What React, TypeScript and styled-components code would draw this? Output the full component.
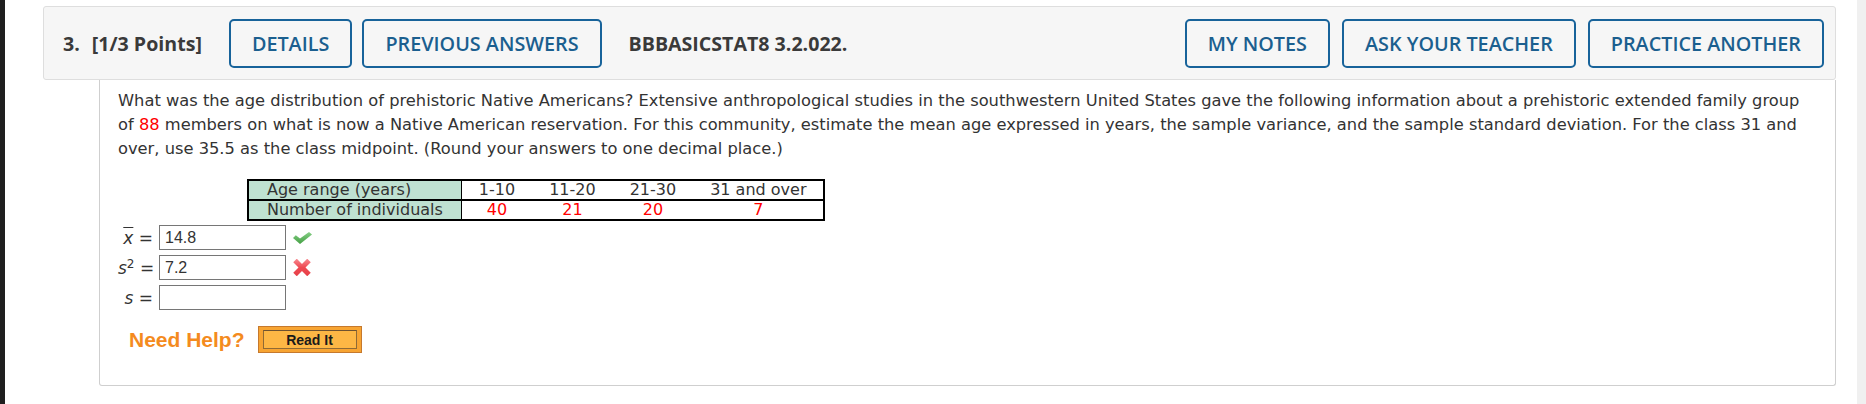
import React from 'react';
import styled, { createGlobalStyle } from 'styled-components';

const GlobalStyle = createGlobalStyle`
  html, body {
    margin: 0;
    padding: 0;
    background: #ffffff;
  }
  body {
    font-family: 'DejaVu Sans', Verdana, sans-serif;
    color: #333333;
  }
`;

const Page = styled.div`
  display: flex;
  height: 404px;
  overflow: hidden;
`;

const WindowEdge = styled.div`
  width: 5px;
  background: #1f1f1f;
  flex-shrink: 0;
`;

const Main = styled.main`
  flex: 1;
  padding: 6px 21px 0 38px;
  min-width: 0;
`;

const ScrollTrack = styled.div`
  width: 9px;
  background: #f0f0f0;
  flex-shrink: 0;
`;

const QuestionHeader = styled.header`
  display: flex;
  align-items: center;
  height: 74px;
  box-sizing: border-box;
  padding: 0 11px 0 19px;
  background: #f6f6f6;
  border: 1px solid #dedede;
  border-radius: 3px;
  font-family: 'Open Sans', 'Liberation Sans', sans-serif;
`;

const Title = styled.div`
  font-size: 19.6px;
  font-weight: 700;
  color: #3a3a3a;
  margin-right: 27px;
  white-space: nowrap;

  span {
    margin-left: 12px;
  }
`;

const HeaderButton = styled.button`
  height: 49px;
  box-sizing: border-box;
  padding: 0 21px;
  background: transparent;
  border: 2px solid #18639a;
  border-radius: 5px;
  font-family: 'Open Sans', 'Liberation Sans', sans-serif;
  font-size: 19.8px;
  font-weight: 600;
  color: #1b5f8f;
  white-space: nowrap;
  cursor: pointer;
`;

const ButtonGroup = styled.div<{ $gap: number }>`
  display: flex;
  gap: ${(p) => p.$gap}px;
`;

const Code = styled.div`
  margin-left: 27px;
  font-size: 19.6px;
  font-weight: 700;
  color: #3a3a3a;
  white-space: nowrap;
`;

const Spacer = styled.div`
  flex: 1;
`;

const QuestionBody = styled.section`
  margin-left: 56px;
  height: 306px;
  box-sizing: border-box;
  padding: 9px 18px 0 18px;
  border: 1px solid #cfcfcf;
  border-top: none;
  border-radius: 0 0 3px 3px;
`;

const Prompt = styled.p`
  margin: 0;
  font-size: 16.3px;
  line-height: 24px;
  color: #333333;
`;

const Red = styled.span`
  color: #ff0000;
`;

const DataTable = styled.table`
  margin: 18px 0 0 129px;
  border-collapse: collapse;
  border: 2px solid #000000;
  font-size: 16px;
  line-height: 18px;
  color: #333333;
`;

const HeadCell = styled.th`
  background: #bfe1d1;
  font-weight: normal;
  text-align: left;
  padding: 0 18px;
  border-right: 1px solid #000000;
  white-space: nowrap;
`;

const ValueCell = styled.td<{ $red?: boolean }>`
  text-align: center;
  padding: 0 17px;
  white-space: nowrap;
  color: ${(p) => (p.$red ? '#ff0000' : '#333333')};
`;

const TopRow = styled.tr`
  border-bottom: 2px solid #000000;
`;

const Answers = styled.div`
  display: flex;
  flex-direction: column;
  gap: 5px;
  margin-top: 4px;
`;

const AnswerRow = styled.div`
  display: flex;
  align-items: center;
`;

const Label = styled.div`
  width: 35px;
  text-align: right;
  font-size: 17px;
  line-height: 20px;
  color: #333333;
  margin-right: 6px;
  white-space: nowrap;

  i {
    font-style: italic;
  }
  sup {
    font-size: 12px;
    vertical-align: 6px;
    line-height: 0;
  }
`;

const Bar = styled.i`
  text-decoration: overline;
`;

const AnswerInput = styled.input`
  width: 127px;
  height: 25px;
  box-sizing: border-box;
  border: 1px solid #767676;
  padding: 0 5px;
  font-family: 'Liberation Sans', Arial, sans-serif;
  font-size: 16px;
  color: #333333;
  background: #ffffff;
  outline: none;
`;

const Mark = styled.div`
  width: 20px;
  margin-left: 6px;
  display: flex;
  align-items: center;
  justify-content: center;
`;

const HelpRow = styled.div`
  display: flex;
  align-items: center;
  margin: 16px 0 0 11px;
`;

const NeedHelp = styled.span`
  font-family: 'Liberation Sans', Arial, sans-serif;
  font-size: 21px;
  font-weight: 700;
  color: #f48b1e;
  margin-right: 13px;
`;

const ReadItOuter = styled.button`
  box-sizing: border-box;
  width: 104px;
  height: 27px;
  padding: 3px 4px;
  background: #f7a432;
  border: 1px solid #c6792d;
  cursor: pointer;
  display: flex;
`;

const ReadItInner = styled.span`
  flex: 1;
  display: flex;
  align-items: center;
  justify-content: center;
  background: #fdb745;
  border: 1px solid #8f6a35;
  border-top-color: #6f5230;
  font-family: 'Liberation Sans', Arial, sans-serif;
  font-size: 14px;
  font-weight: 700;
  color: #1a1a1a;
`;

const CheckIcon = () => (
  <svg width="19" height="12" viewBox="0 0 19 12">
    <defs>
      <linearGradient id="chk" x1="0" y1="0" x2="0" y2="1">
        <stop offset="0" stopColor="#86cf86" />
        <stop offset="1" stopColor="#44a044" />
      </linearGradient>
    </defs>
    <polygon points="0,6 2.8,3.2 7,6.6 16,0 19,2.6 7,12" fill="url(#chk)" />
  </svg>
);

const CrossIcon = () => (
  <svg width="18" height="17" viewBox="0 0 18 17">
    <defs>
      <linearGradient id="crs" x1="0" y1="0" x2="0" y2="1">
        <stop offset="0" stopColor="#f67d84" />
        <stop offset="0.5" stopColor="#ee4a52" />
        <stop offset="1" stopColor="#e8424a" />
      </linearGradient>
    </defs>
    <g stroke="url(#crs)" strokeWidth="5" strokeLinecap="butt">
      <line x1="2" y1="1.5" x2="16" y2="15.5" />
      <line x1="16" y1="1.5" x2="2" y2="15.5" />
    </g>
  </svg>
);

const ranges = ['1-10', '11-20', '21-30', '31 and over'];
const counts = ['40', '21', '20', '7'];

const App: React.FC = () => {
  return (
    <Page>
      <GlobalStyle />
      <WindowEdge />
      <Main>
        <QuestionHeader>
          <Title>
            3.<span>[1/3 Points]</span>
          </Title>
          <ButtonGroup $gap={10}>
            <HeaderButton>DETAILS</HeaderButton>
            <HeaderButton>PREVIOUS ANSWERS</HeaderButton>
          </ButtonGroup>
          <Code>BBBASICSTAT8 3.2.022.</Code>
          <Spacer />
          <ButtonGroup $gap={12}>
            <HeaderButton>MY NOTES</HeaderButton>
            <HeaderButton>ASK YOUR TEACHER</HeaderButton>
            <HeaderButton>PRACTICE ANOTHER</HeaderButton>
          </ButtonGroup>
        </QuestionHeader>
        <QuestionBody>
          <Prompt>
            What was the age distribution of prehistoric Native Americans? Extensive anthropological
            studies in the southwestern United States gave the following information about a
            prehistoric extended family group of <Red>88</Red> members on what is now a Native
            American reservation. For this community, estimate the mean age expressed in years, the
            sample variance, and the sample standard deviation. For the class 31 and over, use 35.5
            as the class midpoint. (Round your answers to one decimal place.)
          </Prompt>
          <DataTable>
            <tbody>
              <TopRow>
                <HeadCell>Age range (years)</HeadCell>
                {ranges.map((r) => (
                  <ValueCell key={r}>{r}</ValueCell>
                ))}
              </TopRow>
              <tr>
                <HeadCell>Number of individuals</HeadCell>
                {counts.map((c, i) => (
                  <ValueCell key={i} $red>
                    {c}
                  </ValueCell>
                ))}
              </tr>
            </tbody>
          </DataTable>
          <Answers>
            <AnswerRow>
              <Label>
                <Bar>x</Bar> =
              </Label>
              <AnswerInput defaultValue="14.8" />
              <Mark>
                <CheckIcon />
              </Mark>
            </AnswerRow>
            <AnswerRow>
              <Label>
                <i>s</i>
                <sup>2</sup> =
              </Label>
              <AnswerInput defaultValue="7.2" />
              <Mark>
                <CrossIcon />
              </Mark>
            </AnswerRow>
            <AnswerRow>
              <Label>
                <i>s</i> =
              </Label>
              <AnswerInput defaultValue="" />
            </AnswerRow>
          </Answers>
          <HelpRow>
            <NeedHelp>Need Help?</NeedHelp>
            <ReadItOuter>
              <ReadItInner>Read It</ReadItInner>
            </ReadItOuter>
          </HelpRow>
        </QuestionBody>
      </Main>
      <ScrollTrack />
    </Page>
  );
};

export default App;
